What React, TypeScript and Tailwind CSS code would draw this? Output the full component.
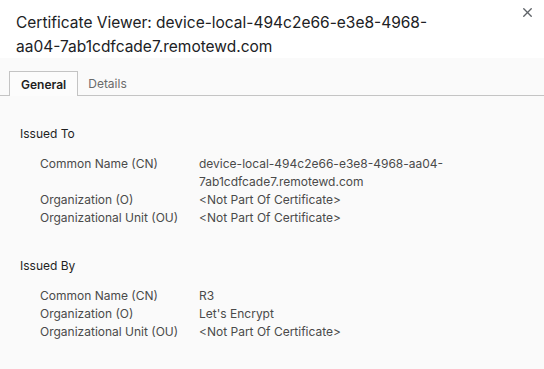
import { X } from "lucide-react";

type Field = { label: string; value: string[] };

const issuedTo: Field[] = [
  {
    label: "Common Name (CN)",
    value: ["device-local-494c2e66-e3e8-4968-aa04-", "7ab1cdfcade7.remotewd.com"],
  },
  { label: "Organization (O)", value: ["<Not Part Of Certificate>"] },
  { label: "Organizational Unit (OU)", value: ["<Not Part Of Certificate>"] },
];

const issuedBy: Field[] = [
  { label: "Common Name (CN)", value: ["R3"] },
  { label: "Organization (O)", value: ["Let's Encrypt"] },
  { label: "Organizational Unit (OU)", value: ["<Not Part Of Certificate>"] },
];

function Section({ title, fields }: { title: string; fields: Field[] }) {
  return (
    <div>
      <h4 className="text-[12px] leading-[18px] text-[#1f1f1f]">{title}</h4>
      <div className="mt-3 grid grid-cols-[159px_1fr] pl-5 text-[12px] leading-[18px] text-[#4a4a4a]">
        {fields.map((f) => (
          <div key={f.label} className="contents">
            <div>{f.label}</div>
            <div>
              {f.value.map((line) => (
                <div key={line}>{line}</div>
              ))}
            </div>
          </div>
        ))}
      </div>
    </div>
  );
}

export default function App() {
  return (
    <div
      className="h-[369px] w-[544px] overflow-hidden bg-[#fafafa]"
      style={{ fontFamily: 'Inter, "Liberation Sans", Arial, sans-serif' }}
    >
      {/* Header */}
      <div className="relative h-[58px] bg-white px-4 pt-[11px]">
        <h2 className="text-[15.5px] leading-6 text-[#202124]">
          Certificate Viewer: device-local-494c2e66-e3e8-4968-
          <br />
          aa04-7ab1cdfcade7.remotewd.com
        </h2>
        <button className="absolute right-[9px] top-[5px] text-[#5f6368]">
          <X className="h-[15px] w-[15px]" strokeWidth={2.2} />
        </button>
      </div>

      {/* Tabs */}
      <div className="flex border-b border-[#c4c4c4] pl-[9px] pt-[13px] text-[12px]">
        <div className="-mb-px flex h-[25px] items-center border border-b-0 border-[#c4c4c4] bg-[#fcfcfc] px-[11px] pt-px font-semibold text-[#1f1f1f]">
          General
        </div>
        <div className="flex h-[24px] items-center px-[10px] pt-px text-[#6b6b6b]">Details</div>
      </div>

      {/* Content */}
      <div className="px-5 pt-[29px]">
        <Section title="Issued To" fields={issuedTo} />
        <div className="mt-[30px]">
          <Section title="Issued By" fields={issuedBy} />
        </div>
      </div>
    </div>
  );
}
